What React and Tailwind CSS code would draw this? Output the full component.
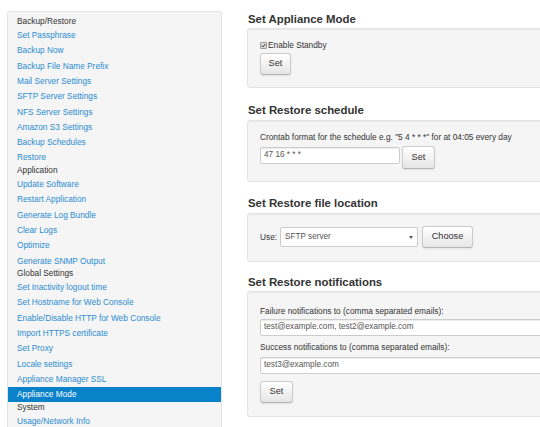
import React from "react";

const sections = [
  { h: "Backup/Restore", items: ["Set Passphrase", "Backup Now", "Backup File Name Prefix", "Mail Server Settings", "SFTP Server Settings", "NFS Server Settings", "Amazon S3 Settings", "Backup Schedules", "Restore"] },
  { h: "Application", items: ["Update Software", "Restart Application", "Generate Log Bundle", "Clear Logs", "Optimize", "Generate SNMP Output"] },
  { h: "Global Settings", items: ["Set Inactivity logout time", "Set Hostname for Web Console", "Enable/Disable HTTP for Web Console", "Import HTTPS certificate", "Set Proxy", "Locale settings", "Appliance Manager SSL", "Appliance Mode"] },
  { h: "System", items: ["Usage/Network Info"] },
];

function Btn({ children, className = "" }) {
  return (
    <button
      className={
        "flex items-center justify-center rounded-[3px] border border-[#cccccc] border-b-[#b3b3b3] bg-gradient-to-b from-white to-[#e6e6e6] text-[9.2px] text-[#333] shadow-[0_1px_2px_rgba(0,0,0,0.08)] " +
        className
      }
    >
      {children}
    </button>
  );
}

function Input({ value, className = "" }) {
  return (
    <div
      className={
        "flex h-[17px] items-center rounded-[2px] border border-[#cccccc] bg-white pl-[3px] text-[8.2px] text-[#555] shadow-[inset_0_1px_1px_rgba(0,0,0,0.075)] " +
        className
      }
    >
      {value}
    </div>
  );
}

function Heading({ children, className = "" }) {
  return (
    <div className={"h-[14px] pl-[1px] text-[11.4px] font-bold leading-[14px] text-[#333] " + className}>
      {children}
    </div>
  );
}

const well = "rounded-[3px] border border-[#e3e3e3] bg-[#f5f5f5] shadow-[inset_0_1px_1px_rgba(0,0,0,0.05)] pl-[12px]";

export default function App() {
  return (
    <div
      className="flex h-[427px] w-[540px] overflow-hidden bg-white text-[#333]"
      style={{ fontFamily: '"Liberation Sans", Arial, sans-serif' }}
    >
      {/* Sidebar */}
      <div className="ml-[7px] mt-[11px] h-[430px] w-[215px] shrink-0 rounded-[3px] border border-[#e3e3e3] bg-[#f5f5f5] pt-[4.35px] text-[8.3px]">
        {sections.map((s) => (
          <div key={s.h}>
            <div className="flex h-[11.3px] items-center pl-[9px] leading-[11.3px] text-[#333]">{s.h}</div>
            {s.items.map((it) =>
              it === "Appliance Mode" ? (
                <div key={it} className="flex h-[15.3px] items-center bg-[#0a82c9] pl-[9px] text-white">
                  {it}
                </div>
              ) : (
                <div key={it} className="flex h-[15.3px] items-center pl-[9px] text-[#2a8bd2]">
                  {it}
                </div>
              )
            )}
          </div>
        ))}
      </div>

      {/* Right column */}
      <div className="ml-[25px] w-[330px] shrink-0 pt-[12px] text-[8.3px]">
        <Heading>Set Appliance Mode</Heading>
        <div className={well + " mt-[2px] h-[60px] pt-[11px]"}>
          <div className="flex h-[10px] items-center">
            <span className="mr-[1px] flex h-[7px] w-[7px] items-center justify-center rounded-[1px] border border-[#9a9a9a] bg-[#dcdcdc]">
              <svg width="5" height="5" viewBox="0 0 10 10">
                <path d="M1.5 5.2 L4 7.8 L8.6 2" fill="none" stroke="#333" strokeWidth="2" />
              </svg>
            </span>
            <span>Enable Standby</span>
          </div>
          <Btn className="mt-[3px] h-[22px] w-[31px]">Set</Btn>
        </div>

        <Heading className="mt-[15px]">Set Restore schedule</Heading>
        <div className={well + " mt-[3px] h-[62px] pt-[11px]"}>
          <div className="flex h-[10px] items-center">
            Crontab format for the schedule e.g. "5 4 * * *" for at 04:05 every day
          </div>
          <div className="mt-[4px] flex items-start">
            <Input value="47 16 * * *" className="mt-[1px] w-[140px]" />
            <Btn className="ml-[2px] h-[23px] w-[33px]">Set</Btn>
          </div>
        </div>

        <Heading className="mt-[14px]">Set Restore file location</Heading>
        <div className={well + " mt-[3px] h-[49px] pt-[12px]"}>
          <div className="flex h-[22px] items-center">
            <span className="w-[20px]">Use:</span>
            <div className="relative flex h-[20px] w-[138px] items-center rounded-[2px] border border-[#cccccc] bg-white pl-[4px] text-[8.2px] text-[#555]">
              SFTP server
              <svg className="absolute right-[4px] top-[8px]" width="4" height="3" viewBox="0 0 4 3">
                <path d="M0 0 H4 L2 3 Z" fill="#555" />
              </svg>
            </div>
            <Btn className="ml-[4px] h-[22px] w-[51px]">Choose</Btn>
          </div>
        </div>

        <Heading className="mt-[13px]">Set Restore notifications</Heading>
        <div className={well + " mt-[2px] h-[126px] pt-[14px]"}>
          <div className="flex h-[10px] items-center">Failure notifications to (comma separated emails):</div>
          <Input value="test@example.com, test2@example.com" className="mt-[3px] w-[320px]" />
          <div className="mt-[6px] flex h-[10px] items-center">Success notifications to (comma separated emails):</div>
          <Input value="test3@example.com" className="mt-[5px] w-[320px]" />
          <Btn className="mt-[7px] h-[22px] w-[33px]">Set</Btn>
        </div>
      </div>
    </div>
  );
}
